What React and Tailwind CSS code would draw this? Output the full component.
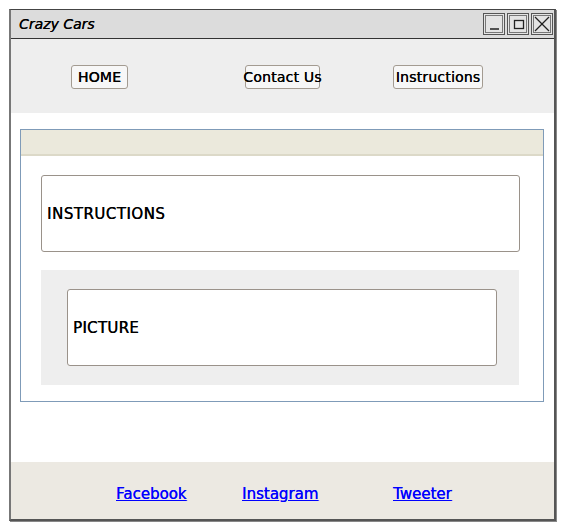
import React from "react";

const font = "font-['DejaVu_Sans',sans-serif]";

function NavButton({ w, children }) {
  return (
    <div
      className={`h-[24px] ${w} flex items-center justify-center rounded-[3px] border border-[#a39b91] bg-[#f7f7f7] text-[14px] text-black whitespace-nowrap tracking-[0.2px] [text-shadow:0.3px_0_0_#000]`}
    >
      {children}
    </div>
  );
}

function WinBtn({ children }) {
  return (
    <div className="w-[22px] h-[22px] border border-[#555] bg-[#e4e4e4] flex items-center justify-center">
      <div className="w-[18px] h-[18px] border border-[#777] flex items-center justify-center">
        {children}
      </div>
    </div>
  );
}

export default function App() {
  return (
    <div className={`w-[565px] h-[530px] bg-white ${font} overflow-hidden`}>
      <div className="ml-[9px] mt-[9px] w-[547px] h-[512px] border-t border-l-2 border-r-2 border-b-2 border-t-[#444] border-l-[#777] border-r-[#555] border-b-[#555] flex flex-col shadow-[1px_1px_0_#888]">
        {/* Title bar */}
        <div className="h-[29px] shrink-0 bg-[#dcdcdc] border-b border-[#333] flex items-center justify-between pl-[8px] pr-[1px]">
          <span className="text-[14px] italic text-black [text-shadow:0.3px_0_0_#000]">Crazy Cars</span>
          <div className="flex gap-[2px] items-center">
            <WinBtn>
              <svg width="13" height="14" viewBox="0 0 13 14">
                <line x1="2" y1="12" x2="11" y2="12" stroke="#222" strokeWidth="1.5" />
              </svg>
            </WinBtn>
            <WinBtn>
              <svg width="13" height="14" viewBox="0 0 13 14">
                <rect x="2.5" y="3.5" width="9" height="8" fill="none" stroke="#222" strokeWidth="1.3" />
              </svg>
            </WinBtn>
            <WinBtn>
              <svg width="16" height="16" viewBox="0 0 16 16">
                <line x1="1" y1="1" x2="15" y2="15" stroke="#222" strokeWidth="1.3" />
                <line x1="15" y1="1" x2="1" y2="15" stroke="#222" strokeWidth="1.3" />
              </svg>
            </WinBtn>
          </div>
        </div>

        {/* Nav */}
        <div className="h-[74px] shrink-0 bg-[#eeeeee] flex items-center pl-[60px] pt-[2px]">
          <NavButton w="w-[57px]">HOME</NavButton>
          <div className="w-[117px]" />
          <NavButton w="w-[75px]">Contact Us</NavButton>
          <div className="w-[73px]" />
          <NavButton w="w-[90px]">Instructions</NavButton>
        </div>

        {/* Main */}
        <div className="flex-1 bg-white pt-[16px] pl-[9px] pr-[9px]">
          <div className="w-[524px] h-[273px] border border-[#7f9bb8] flex flex-col">
            <div className="h-[26px] shrink-0 bg-[#ebe9dc] border-b-2 border-[#dcd9c8]" />
            <div className="pl-[20px] pt-[19px]">
              <div className="w-[479px] h-[77px] rounded-[3px] border border-[#9a928a] bg-white flex items-center pl-[5px] pt-[2px] text-[15px] tracking-[0.5px] text-black [text-shadow:0.3px_0_0_#000]">
                INSTRUCTIONS
              </div>
              <div className="mt-[18px] w-[478px] h-[115px] bg-[#eeeeee] pl-[26px] pt-[19px]">
                <div className="w-[430px] h-[77px] rounded-[3px] border border-[#9a928a] bg-white flex items-center pl-[5px] pt-[2px] text-[15px] tracking-[0.3px] text-black [text-shadow:0.3px_0_0_#000]">
                  PICTURE
                </div>
              </div>
            </div>
          </div>
        </div>

        {/* Footer */}
        <div className="h-[57px] shrink-0 bg-[#ece9e2] flex items-center pl-[105px] pt-[7px] text-[15px]">
          <div className="w-[126px]">
            <a href="#" className="text-[#0000ff] underline [text-shadow:0.3px_0_0_#0000ff]">Facebook</a>
          </div>
          <div className="w-[151px]">
            <a href="#" className="text-[#0000ff] underline [text-shadow:0.3px_0_0_#0000ff]">Instagram</a>
          </div>
          <div>
            <a href="#" className="text-[#0000ff] underline [text-shadow:0.3px_0_0_#0000ff]">Tweeter</a>
          </div>
        </div>
      </div>
    </div>
  );
}
